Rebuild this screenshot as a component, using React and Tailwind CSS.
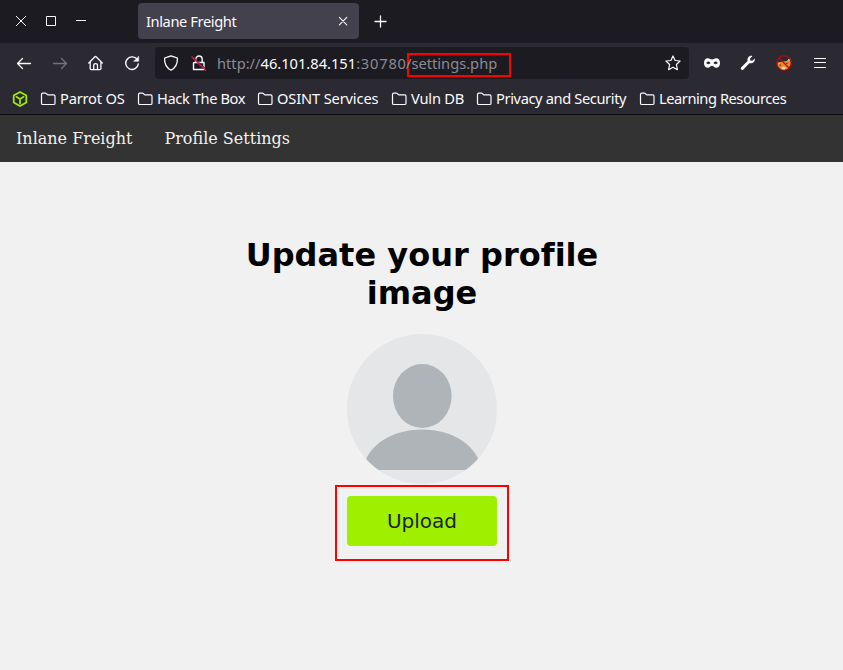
import React from 'react';

const stroke = { fill: 'none', stroke: 'currentColor', strokeLinecap: 'round', strokeLinejoin: 'round' };

function Folder() {
  return (
    <svg className="size-4 shrink-0" viewBox="0 0 16 16" {...stroke} strokeWidth="1.2">
      <path d="M1.5 3.600c0-.9.500-1.400 1.300-1.400h2.600c.5 0 .8.2 1.100.5l1.300 1.200h5.900c.8 0 1.300.5 1.300 1.300v7c0 .8-.5 1.300-1.300 1.300H2.800c-.8 0-1.300-.5-1.300-1.300z" />
    </svg>
  );
}

const bookmarks = [
  { label: 'Parrot OS', width: 'w-[97px]', tracking: 'tracking-[-0.2px]' },
  { label: 'Hack The Box', width: 'w-[120px]', tracking: 'tracking-[-0.4px]' },
  { label: 'OSINT Services', width: 'w-[134px]', tracking: 'tracking-[-0.15px]' },
  { label: 'Vuln DB', width: 'w-[85px]', tracking: 'tracking-[-0.2px]' },
  { label: 'Privacy and Security', width: 'w-[163px]', tracking: 'tracking-[-0.38px]' },
  { label: 'Learning Resources', width: 'w-[160px]', tracking: 'tracking-[-0.45px]' },
];

function TabStrip() {
  return (
    <div className="flex h-[43px] items-start bg-[#1c1b22] pl-[13px]">
      <svg className="mt-[13px] h-4 w-[76px] shrink-0" viewBox="0 0 76 16" fill="none" stroke="currentColor" strokeWidth="1">
        <path d="M3 3l10 10M13 3L3 13" />
        <path d="M33.5 3.5h9v9h-9zM63 7.5h10" />
      </svg>
      <div className="ml-[49px] mt-[3px] flex h-9 w-[221px] items-center justify-between rounded bg-[#42414d] pl-2 pr-2">
        <span className="text-[14.67px] leading-9 tracking-[-0.4px]">Inlane Freight</span>
        <svg className="size-4" viewBox="0 0 16 16" {...stroke} strokeWidth="1.1">
          <path d="M4.4 4.4l7.4 7.4M11.8 4.4l-7.4 7.4" />
        </svg>
      </div>
      <svg className="ml-[13px] mt-[13px] size-4" viewBox="0 0 16 16" {...stroke} strokeWidth="1.3">
        <path d="M8.5 3v11M3 8.5h11" />
      </svg>
    </div>
  );
}

function AddressBar() {
  return (
    <div className="ml-[15px] flex h-8 w-[534px] items-center rounded bg-[#1c1b22] pl-2 pr-2">
      <svg className="size-4 shrink-0" viewBox="0 0 16 16" {...stroke} strokeWidth="1.3">
        <path d="M8 .8c2 .8 4.100 1.500 6.400 2.200C14.700 8 12.600 12.700 8 15.200 3.400 12.700 1.300 8 1.600 3 3.900 2.300 6 1.600 8 .8z" />
      </svg>
      <svg className="ml-3 size-4 shrink-0" viewBox="0 0 16 16" {...stroke} strokeWidth="1.4">
        <path d="M4.800 7.500V4.200a3.200 3.200 0 0 1 6.400 0v3.300M3.200 7.500h9.800v7H2.500V8.200c0-.4.300-.7.700-.7z" />
        <path d="M2 1.800L15.300 14.500" stroke="#1c1b22" strokeWidth="1" />
        <path d="M1 2L14.600 15.200" stroke="#e9184c" strokeWidth="1.400" />
      </svg>
      <div className="ml-[10px] flex items-center whitespace-nowrap text-[14.67px] leading-6 text-[#8c8b91]">
        <span className="w-[190px] shrink-0">http://<span className="text-[#fbfbfe]">46.101.84.151</span><span className="tracking-[0.8px]">:30780</span></span>
        <span className="mt-[3px] h-6 w-[104px] border-2 border-[#f00] leading-[17px] indent-[-3px]">/settings.php</span>
      </div>
      <svg className="ml-auto size-4 shrink-0" viewBox="0 0 16 16" {...stroke} strokeWidth="1.2">
        <path d="M8 .9l2.100 4.600 5 .5-3.700 3.500 1 5.200L8 12.200l-4.400 2.500 1-5.200L.9 6l5-.5z" />
      </svg>
    </div>
  );
}

function FoxIcon() {
  return (
    <svg className="size-4" viewBox="0 0 16 16">
      <path d="M1.500 7.500L1.500 11l4 4 6-.5 3.200-5L14.300 3l-3.800 3-4 .5z" fill="#e8882f" />
      <path d="M5 13.500l2-2 3 1-1 2.500H6z" fill="#ddd0c6" />
      <path d="M3.500 9.800l1.500.8M10 8.800L11.500 8" stroke="#67351e" strokeWidth="1.100" />
      <path d="M11.500 5.200l1.800-1.500v2zM2.500 8l1.500.2-1.200 1.400z" fill="#f4ded0" />
      <circle cx="8" cy="8" r="7.300" fill="none" stroke="#b50d0d" strokeWidth="1.100" />
      <path d="M3 3l10 10" stroke="#b50d0d" strokeWidth="1.100" />
    </svg>
  );
}

function Toolbar() {
  return (
    <div className="flex h-10 items-center pl-4">
      <svg className="size-4 shrink-0" viewBox="0 0 16 16" {...stroke} strokeWidth="1.3">
        <path d="M14.500 8.500h-13M6.500 3.500l-5 5 5 5" />
      </svg>
      <svg className="ml-5 size-4 shrink-0 text-[#74737a]" viewBox="0 0 16 16" {...stroke} strokeWidth="1.3">
        <path d="M1.500 8.500h13M9.500 3.500l5 5-5 5" />
      </svg>
      <svg className="ml-5 size-4 shrink-0" viewBox="0 0 16 16" {...stroke} strokeWidth="1.3">
        <path d="M.8 8l6.100-6.200c.4-.4.800-.4 1.200 0L14.300 8M2.200 7v6.500c0 .7.400 1.100 1.100 1.100h8.500c.7 0 1.100-.4 1.100-1.100V7M5.700 14v-3.500c0-1.200.6-1.800 1.900-1.800s1.900.6 1.900 1.800V14" />
      </svg>
      <svg className="ml-5 size-4 shrink-0" viewBox="0 0 16 16" {...stroke} strokeWidth="1.4">
        <path d="M13.500 5A6.300 6.300 0 1 0 14.300 9" />
        <path d="M14.700 1.500v4.800H9.900z" fill="currentColor" strokeWidth=".5" />
      </svg>
      <AddressBar />
      <svg className="ml-[15px] size-4 shrink-0" viewBox="0 0 16 16" fill="currentColor">
        <path fillRule="evenodd" d="M4 3.200c1.700 0 2.600 1.300 4 1.300s2.300-1.300 4-1.300c2.600 0 4 1.900 4 4.700 0 3-1.400 4.900-3.900 4.900-1.900 0-2.600-2-4.100-2s-2.200 2-4.100 2C1.400 12.800 0 10.900 0 7.900c0-2.800 1.400-4.700 4-4.700zM4.300 6.500c-1 0-1.700.8-2 1.600.3.700 1.100 1.100 2 1.100s1.800-.5 2.200-1.100c-.4-.9-1.200-1.600-2.200-1.600zm7.400 0c-1 0-1.800.7-2.200 1.600.4.600 1.300 1.100 2.200 1.100s1.700-.4 2-1.100c-.3-.8-1-1.600-2-1.600z" />
      </svg>
      <svg className="ml-5 size-4 shrink-0" viewBox="0 0 16 16" fill="currentColor">
        <path d="M14.700 3.500l-2.500 2.200-1.800-.3-.4-1.700 2.500-2.700C9.600.1 7 2.500 7.500 5.900L1.300 12.300c-.8.9-.6 1.700-.1 2.300.7.700 1.500.6 2.200-.1l6-6.300c3.300.6 6.100-1.600 5.300-4.700z" />
      </svg>
      <div className="ml-5"><FoxIcon /></div>
      <svg className="ml-5 size-4 shrink-0" viewBox="0 0 16 16" {...stroke} strokeWidth="1.1">
        <path d="M2.500 3.500h11M2.500 7.500h11M2.500 12.500h11" />
      </svg>
    </div>
  );
}

function BookmarkBar() {
  return (
    <div className="flex h-[31px] items-center pl-3">
      <svg className="mr-3 size-4 shrink-0 text-[#9fef00]" viewBox="0 0 16 16" {...stroke} strokeWidth="1.7">
        <path d="M8 .9l6.300 3.500v7.200L8 15.100l-6.300-3.500V4.400zM4.300 5.800L8 7.900l3.700-2.100M8 7.900v4.600" />
      </svg>
      {bookmarks.map(({ label, width, tracking }) => (
        <div key={label} className={`flex h-[30px] shrink-0 items-center gap-1 whitespace-nowrap text-[14.67px] leading-6 ${width} ${tracking}`}>
          <Folder />
          <span className="-mt-0.5">{label}</span>
        </div>
      ))}
    </div>
  );
}

export default function App() {
  return (
    <div className="flex h-[670px] w-[843px] flex-col overflow-hidden bg-[#f1f1f1]">
      <header className="h-[115px] shrink-0 border-b border-[#0c0c0d] bg-[#2b2a33] font-['Noto_Sans',sans-serif] text-[#fbfbfe]">
        <TabStrip />
        <Toolbar />
        <BookmarkBar />
      </header>
      <nav className="flex h-[47px] shrink-0 gap-8 bg-[#333] px-4 font-['DejaVu_Serif',serif] text-base leading-[47px] text-[#f2f2f2]">
        <a>Inlane Freight</a>
        <a>Profile Settings</a>
      </nav>
      <main className="flex flex-col items-center pt-[74px] font-['DejaVu_Sans',sans-serif]">
        <h1 className="w-[400px] pl-px text-center text-[32px] font-bold leading-[38px] tracking-[0.02px] text-black">Update your profile image</h1>
        <svg className="mt-[22px] size-[150px]" viewBox="0 0 150 150">
          <defs>
            <clipPath id="avatar"><circle cx="75" cy="75" r="75" /></clipPath>
          </defs>
          <circle cx="75" cy="75" r="75" fill="#e4e6e7" />
          <g fill="#aeb4b7" clipPath="url(#avatar)">
            <ellipse cx="75.300" cy="62" rx="29.300" ry="32" />
            <path d="M16 136C19 112 44 95.500 75.300 95.500S131 112 134.500 136z" />
          </g>
        </svg>
        <div className="mt-px flex h-[76px] w-[174px] justify-center border-2 border-[#f00] pt-[9px]">
          <button className="h-[50px] w-[150px] rounded bg-[#9fef00] pl-px text-xl leading-[50px] text-[#1a2332]">Upload</button>
        </div>
      </main>
    </div>
  );
}
